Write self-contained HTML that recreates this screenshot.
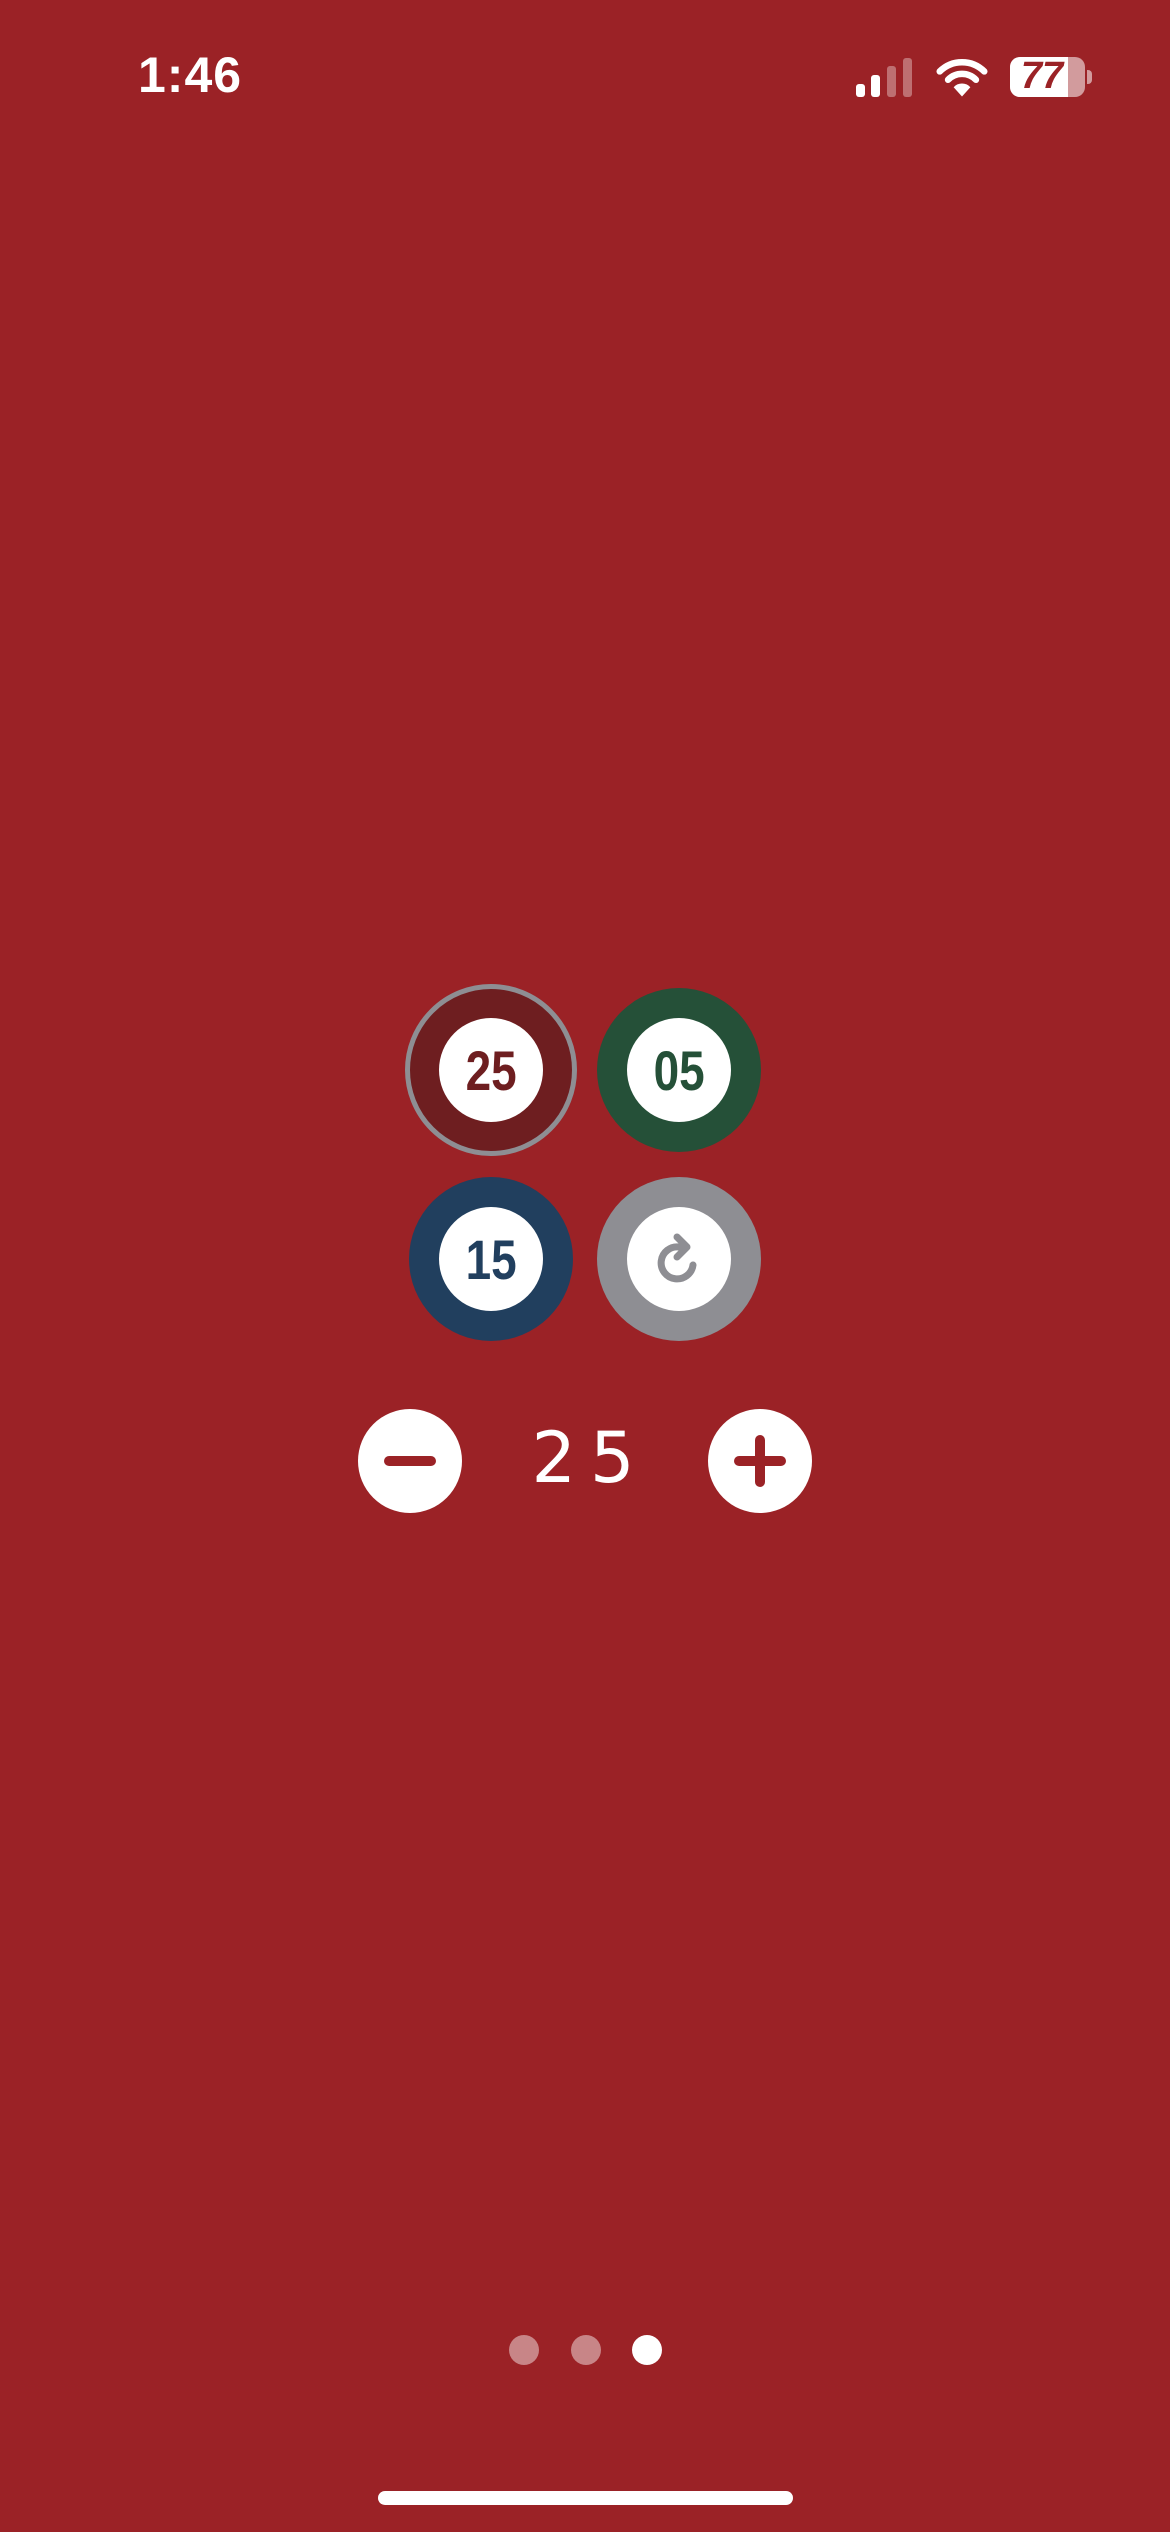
<!DOCTYPE html>
<html><head><meta charset="utf-8"><style>
body{margin:0;width:1170px;height:2532px;background:#9B2226;position:relative;overflow:hidden;font-family:"Liberation Sans",sans-serif}
.a{position:absolute}
.c{position:absolute;border-radius:50%;box-sizing:border-box}
.in{position:absolute;left:50%;top:50%;width:104px;height:104px;margin:-52px 0 0 -52px;border-radius:50%;background:#fff;display:flex;align-items:center;justify-content:center;font-weight:bold;font-size:56px}
.in span{display:inline-block;transform:scaleX(0.82)}
</style></head><body>
<div class="a" style="left:138px;top:46px;color:#fff;font-size:50px;font-weight:bold;letter-spacing:1px">1:46</div>
<div class="a" style="left:856px;top:84px;width:9px;height:13px;background:#fff;border-radius:3px"></div>
<div class="a" style="left:871px;top:75px;width:9px;height:22px;background:#fff;border-radius:3px"></div>
<div class="a" style="left:887px;top:66px;width:9px;height:31px;background:rgba(255,255,255,.35);border-radius:3px"></div>
<div class="a" style="left:903px;top:58px;width:9px;height:39px;background:rgba(255,255,255,.35);border-radius:3px"></div>
<svg class="a" style="left:936px;top:56px" width="52" height="42" viewBox="0 0 56 44"><path d="M4 16 A34 34 0 0 1 52 16" stroke="#fff" stroke-width="7" fill="none" stroke-linecap="round"/><path d="M13 25 A21 21 0 0 1 43 25" stroke="#fff" stroke-width="7" fill="none" stroke-linecap="round"/><path d="M28 43 L19 33 A12 12 0 0 1 37 33 Z" fill="#fff"/></svg>
<div class="a" style="left:1010px;top:57px;width:75px;height:40px;border-radius:10px;background:rgba(255,255,255,.55);overflow:hidden"><div style="width:58px;height:40px;background:#fff"></div></div>
<div class="a" style="left:1087px;top:70px;width:5px;height:14px;border-radius:0 4px 4px 0;background:rgba(255,255,255,.55)"></div>
<div class="a" style="left:1010px;top:55px;width:64px;text-align:center;font-size:38px;font-weight:bold;color:#9B2226;font-style:italic">77</div>

<div class="c" style="left:405px;top:984px;width:172px;height:172px;background:#6E1E20;border:5px solid #8E8E93"><div class="in" style="color:#6E1E20"><span>25</span></div></div>
<div class="c" style="left:597px;top:988px;width:164px;height:164px;background:#255038"><div class="in" style="color:#255038"><span>05</span></div></div>
<div class="c" style="left:409px;top:1177px;width:164px;height:164px;background:#213F5E"><div class="in" style="color:#213F5E"><span>15</span></div></div>
<div class="c" style="left:597px;top:1177px;width:164px;height:164px;background:#8E8E93"><div class="in"><svg width="60" height="60" viewBox="0 0 60 60"><path d="M44 36 A16 16 0 1 1 30 18" stroke="#8E8E93" stroke-width="7" fill="none" stroke-linecap="round"/><path d="M28 8 L38 18 L28 28" stroke="#8E8E93" stroke-width="7" fill="none" stroke-linecap="round" stroke-linejoin="round"/></svg></div></div>

<div class="c" style="left:358px;top:1409px;width:104px;height:104px;background:#fff"><div class="a" style="left:26px;top:47px;width:52px;height:10px;border-radius:5px;background:#9B2226"></div></div>
<div class="c" style="left:708px;top:1409px;width:104px;height:104px;background:#fff"><div class="a" style="left:26px;top:47px;width:52px;height:10px;border-radius:5px;background:#9B2226"></div><div class="a" style="left:47px;top:26px;width:10px;height:52px;border-radius:5px;background:#9B2226"></div></div>
<div class="a" style="left:490px;top:1417px;width:200px;text-align:center;color:#fff;font-size:70px;letter-spacing:14px;font-family:'DejaVu Sans',sans-serif">25</div>

<div class="c" style="left:509px;top:2335px;width:30px;height:30px;background:rgba(255,255,255,.45)"></div>
<div class="c" style="left:571px;top:2335px;width:30px;height:30px;background:rgba(255,255,255,.45)"></div>
<div class="c" style="left:632px;top:2335px;width:30px;height:30px;background:#fff"></div>
<div class="a" style="left:378px;top:2491px;width:415px;height:14px;border-radius:7px;background:#fff"></div>
</body></html>
